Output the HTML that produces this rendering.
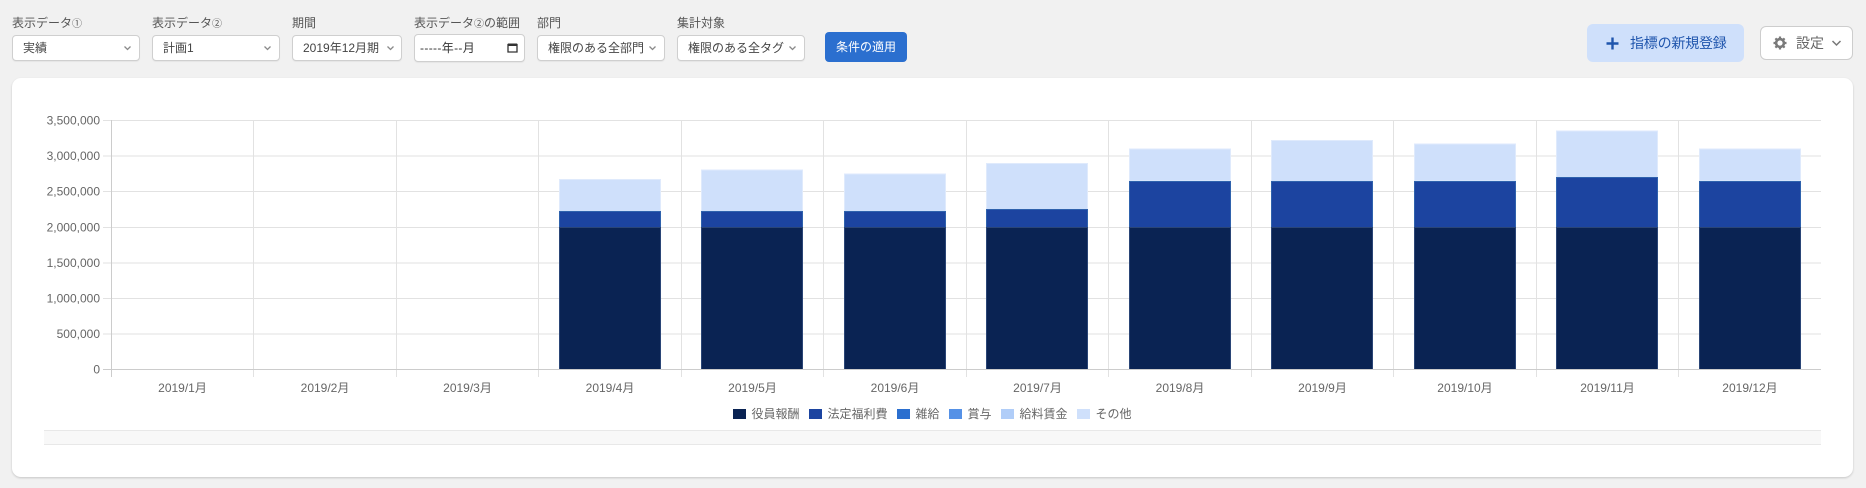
<!DOCTYPE html>
<html lang="ja">
<head>
<meta charset="utf-8">
<title>Chart</title>
<style>
html,body{margin:0;padding:0;width:1866px;height:488px;overflow:hidden;background:#f1f1f1;font-family:"Liberation Sans","Noto Sans CJK JP",sans-serif;}
.abs{position:absolute;box-sizing:border-box;white-space:nowrap;}
.lbl{font-size:12px;line-height:16px;color:#555;top:15px;}
.lbl i{font-style:normal;font-size:10px;}
.sel{top:35px;height:26px;background:#fff;border:1px solid #cfcfcf;border-radius:4px;font-size:12px;line-height:24px;color:#444;box-shadow:0 1px 1px rgba(0,0,0,.05);}
.sel span{position:absolute;top:0;}
.sel svg{position:absolute;top:8px;}
.card{left:12px;top:78px;width:1841px;height:399px;background:#fff;border-radius:9px;box-shadow:0 1px 2px rgba(0,0,0,.18);}
.btn{left:825px;top:32px;width:82px;height:30px;background:#2b6fcf;border-radius:4px;color:#fff;font-size:12px;line-height:30px;text-align:center;}
svg text{font-family:"Liberation Sans","Noto Sans CJK JP",sans-serif;font-size:12px;fill:#666;}
</style>
</head>
<body>
<div class="abs lbl" style="left:12px">表示データ<i>①</i></div>
<div class="abs lbl" style="left:152px">表示データ<i>②</i></div>
<div class="abs lbl" style="left:292px">期間</div>
<div class="abs lbl" style="left:414px">表示データ<i>②</i>の範囲</div>
<div class="abs lbl" style="left:537px">部門</div>
<div class="abs lbl" style="left:677px">集計対象</div>

<div class="abs sel" style="left:12px;width:128px"><span style="left:10px">実績</span><svg style="left:110px" width="9" height="8" viewBox="0 0 9 8"><path d="M1.5 2.5L4.5 5.5L7.5 2.5" fill="none" stroke="#8a8a8a" stroke-width="1.3"/></svg></div>
<div class="abs sel" style="left:152px;width:128px"><span style="left:10px">計画1</span><svg style="left:110px" width="9" height="8" viewBox="0 0 9 8"><path d="M1.5 2.5L4.5 5.5L7.5 2.5" fill="none" stroke="#8a8a8a" stroke-width="1.3"/></svg></div>
<div class="abs sel" style="left:292px;width:110px"><span style="left:10px">2019年12月期</span><svg style="left:93px" width="9" height="8" viewBox="0 0 9 8"><path d="M1.5 2.5L4.5 5.5L7.5 2.5" fill="none" stroke="#8a8a8a" stroke-width="1.3"/></svg></div>
<div class="abs sel" style="left:414px;top:34px;width:111px;height:28px;line-height:26px;color:#333"><span style="left:5px;letter-spacing:.35px">-----年--月</span><svg style="left:92px;top:7px" width="11" height="11" viewBox="0 0 11 11"><path d="M1 2.5H10V10H1Z" fill="none" stroke="#333" stroke-width="1.3"/><rect x="1" y="1.5" width="9" height="2.5" fill="#333"/></svg></div>
<div class="abs sel" style="left:537px;width:128px"><span style="left:10px">権限のある全部門</span><svg style="left:110px" width="9" height="8" viewBox="0 0 9 8"><path d="M1.5 2.5L4.5 5.5L7.5 2.5" fill="none" stroke="#8a8a8a" stroke-width="1.3"/></svg></div>
<div class="abs sel" style="left:677px;width:128px"><span style="left:10px">権限のある全タグ</span><svg style="left:110px" width="9" height="8" viewBox="0 0 9 8"><path d="M1.5 2.5L4.5 5.5L7.5 2.5" fill="none" stroke="#8a8a8a" stroke-width="1.3"/></svg></div>
<div class="abs btn">条件の適用</div>

<div class="abs" style="left:1587px;top:24px;width:157px;height:38px;background:#cfe0fb;border-radius:6px;color:#1f55ad;font-size:14px;line-height:38px;">
  <svg style="position:absolute;left:19px;top:13px" width="13" height="13" viewBox="0 0 13 13"><path d="M6.5 .5V12.5M.5 6.5H12.5" stroke="#1f55ad" stroke-width="2.4" fill="none"/></svg>
  <span style="position:absolute;left:43px;top:0;letter-spacing:-.2px">指標の新規登録</span>
</div>
<div class="abs" style="left:1760px;top:26px;width:93px;height:34px;background:#fff;border:1px solid #cdcdcd;border-radius:6px;color:#666;font-size:14px;line-height:32px;">
  <svg style="position:absolute;left:12px;top:9px" width="14" height="14" viewBox="0 0 14 14"><circle cx="7" cy="7" r="3.9" fill="none" stroke="#7a7a7a" stroke-width="2.6"/><path d="M7 .5V3M7 11V13.5M.5 7H3M11 7H13.5M2.4 2.4L4.2 4.2M9.8 9.8L11.6 11.6M2.4 11.6L4.2 9.8M9.8 4.2L11.6 2.4" stroke="#7a7a7a" stroke-width="2.2"/></svg>
  <span style="position:absolute;left:35px;top:0">設定</span>
  <svg style="position:absolute;left:70px;top:12px" width="11" height="9" viewBox="0 0 11 9"><path d="M1.5 2L5.5 6L9.5 2" fill="none" stroke="#777" stroke-width="1.5"/></svg>
</div>

<div class="abs card"></div>
<div class="abs" style="left:44px;top:430px;width:1777px;height:15px;background:#f8f8f8;border-top:1px solid #e8e8e8;border-bottom:1px solid #e8e8e8;"></div>

<svg class="abs" style="left:0;top:0" width="1866" height="488" viewBox="0 0 1866 488">
  <g stroke="#e2e2e2" stroke-width="1" fill="none">
    <path d="M103 120.5H1821M103 156H1821M103 191.5H1821M103 227.5H1821M103 263H1821M103 298.5H1821M103 334H1821"/>
    <path d="M253.5 120V377M396.5 120V377M538.5 120V377M681.5 120V377M823.5 120V377M966.5 120V377M1108.5 120V377M1251.5 120V377M1393.5 120V377M1536.5 120V377M1678.5 120V377"/>
  </g>
  <g stroke="#dfeafc" stroke-width="1" fill="#cfe0fb">
    <rect x="559.5" y="179.5" width="101" height="32"/>
    <rect x="701.5" y="170" width="101" height="42"/>
    <rect x="844.5" y="174" width="101" height="38"/>
    <rect x="986.5" y="163.5" width="101" height="46"/>
    <rect x="1129.5" y="149" width="101" height="32"/>
    <rect x="1271.5" y="140.5" width="101" height="41"/>
    <rect x="1414.5" y="144" width="101" height="37"/>
    <rect x="1556.5" y="131" width="101" height="47"/>
    <rect x="1699.5" y="149" width="101" height="32"/>
  </g>
  <g stroke="#2f62ad" stroke-width="1" fill="#1c44a0">
    <rect x="559.5" y="211.5" width="101" height="16"/>
    <rect x="701.5" y="211.5" width="101" height="16"/>
    <rect x="844.5" y="211.5" width="101" height="16"/>
    <rect x="986.5" y="209.5" width="101" height="18"/>
    <rect x="1129.5" y="181.5" width="101" height="46"/>
    <rect x="1271.5" y="181.5" width="101" height="46"/>
    <rect x="1414.5" y="181.5" width="101" height="46"/>
    <rect x="1556.5" y="177.5" width="101" height="50"/>
    <rect x="1699.5" y="181.5" width="101" height="46"/>
  </g>
  <g stroke="#2a4576" stroke-width="1" fill="#0a2353">
    <rect x="559.5" y="227.5" width="101" height="142"/>
    <rect x="701.5" y="227.5" width="101" height="142"/>
    <rect x="844.5" y="227.5" width="101" height="142"/>
    <rect x="986.5" y="227.5" width="101" height="142"/>
    <rect x="1129.5" y="227.5" width="101" height="142"/>
    <rect x="1271.5" y="227.5" width="101" height="142"/>
    <rect x="1414.5" y="227.5" width="101" height="142"/>
    <rect x="1556.5" y="227.5" width="101" height="142"/>
    <rect x="1699.5" y="227.5" width="101" height="142"/>
  </g>
  <path d="M103 369.5H1821M111.5 120V377" stroke="#cccccc" stroke-width="1" fill="none"/>
  <g text-anchor="end">
    <text x="100" y="124.5">3,500,000</text>
    <text x="100" y="160">3,000,000</text>
    <text x="100" y="195.5">2,500,000</text>
    <text x="100" y="231.5">2,000,000</text>
    <text x="100" y="267">1,500,000</text>
    <text x="100" y="302.5">1,000,000</text>
    <text x="100" y="338">500,000</text>
    <text x="100" y="373.5">0</text>
  </g>
  <g text-anchor="middle">
    <text x="182.5" y="392">2019/1月</text>
    <text x="325" y="392">2019/2月</text>
    <text x="467.5" y="392">2019/3月</text>
    <text x="610" y="392">2019/4月</text>
    <text x="752.5" y="392">2019/5月</text>
    <text x="895" y="392">2019/6月</text>
    <text x="1037.5" y="392">2019/7月</text>
    <text x="1180" y="392">2019/8月</text>
    <text x="1322.5" y="392">2019/9月</text>
    <text x="1465" y="392">2019/10月</text>
    <text x="1607.5" y="392">2019/11月</text>
    <text x="1750" y="392">2019/12月</text>
  </g>
  <rect x="733" y="409" width="13" height="10" fill="#0a2353"/>
  <rect x="809" y="409" width="13" height="10" fill="#1c44a0"/>
  <rect x="897" y="409" width="13" height="10" fill="#2b6fcf"/>
  <rect x="949" y="409" width="13" height="10" fill="#5591e6"/>
  <rect x="1001" y="409" width="13" height="10" fill="#b0cdf8"/>
  <rect x="1077" y="409" width="13" height="10" fill="#cfe0fb"/>
  <text x="751.5" y="418">役員報酬</text>
  <text x="827.5" y="418">法定福利費</text>
  <text x="915.5" y="418">雑給</text>
  <text x="967.5" y="418">賞与</text>
  <text x="1019.5" y="418">給料賃金</text>
  <text x="1095.5" y="418">その他</text>
</svg>
</body>
</html>
